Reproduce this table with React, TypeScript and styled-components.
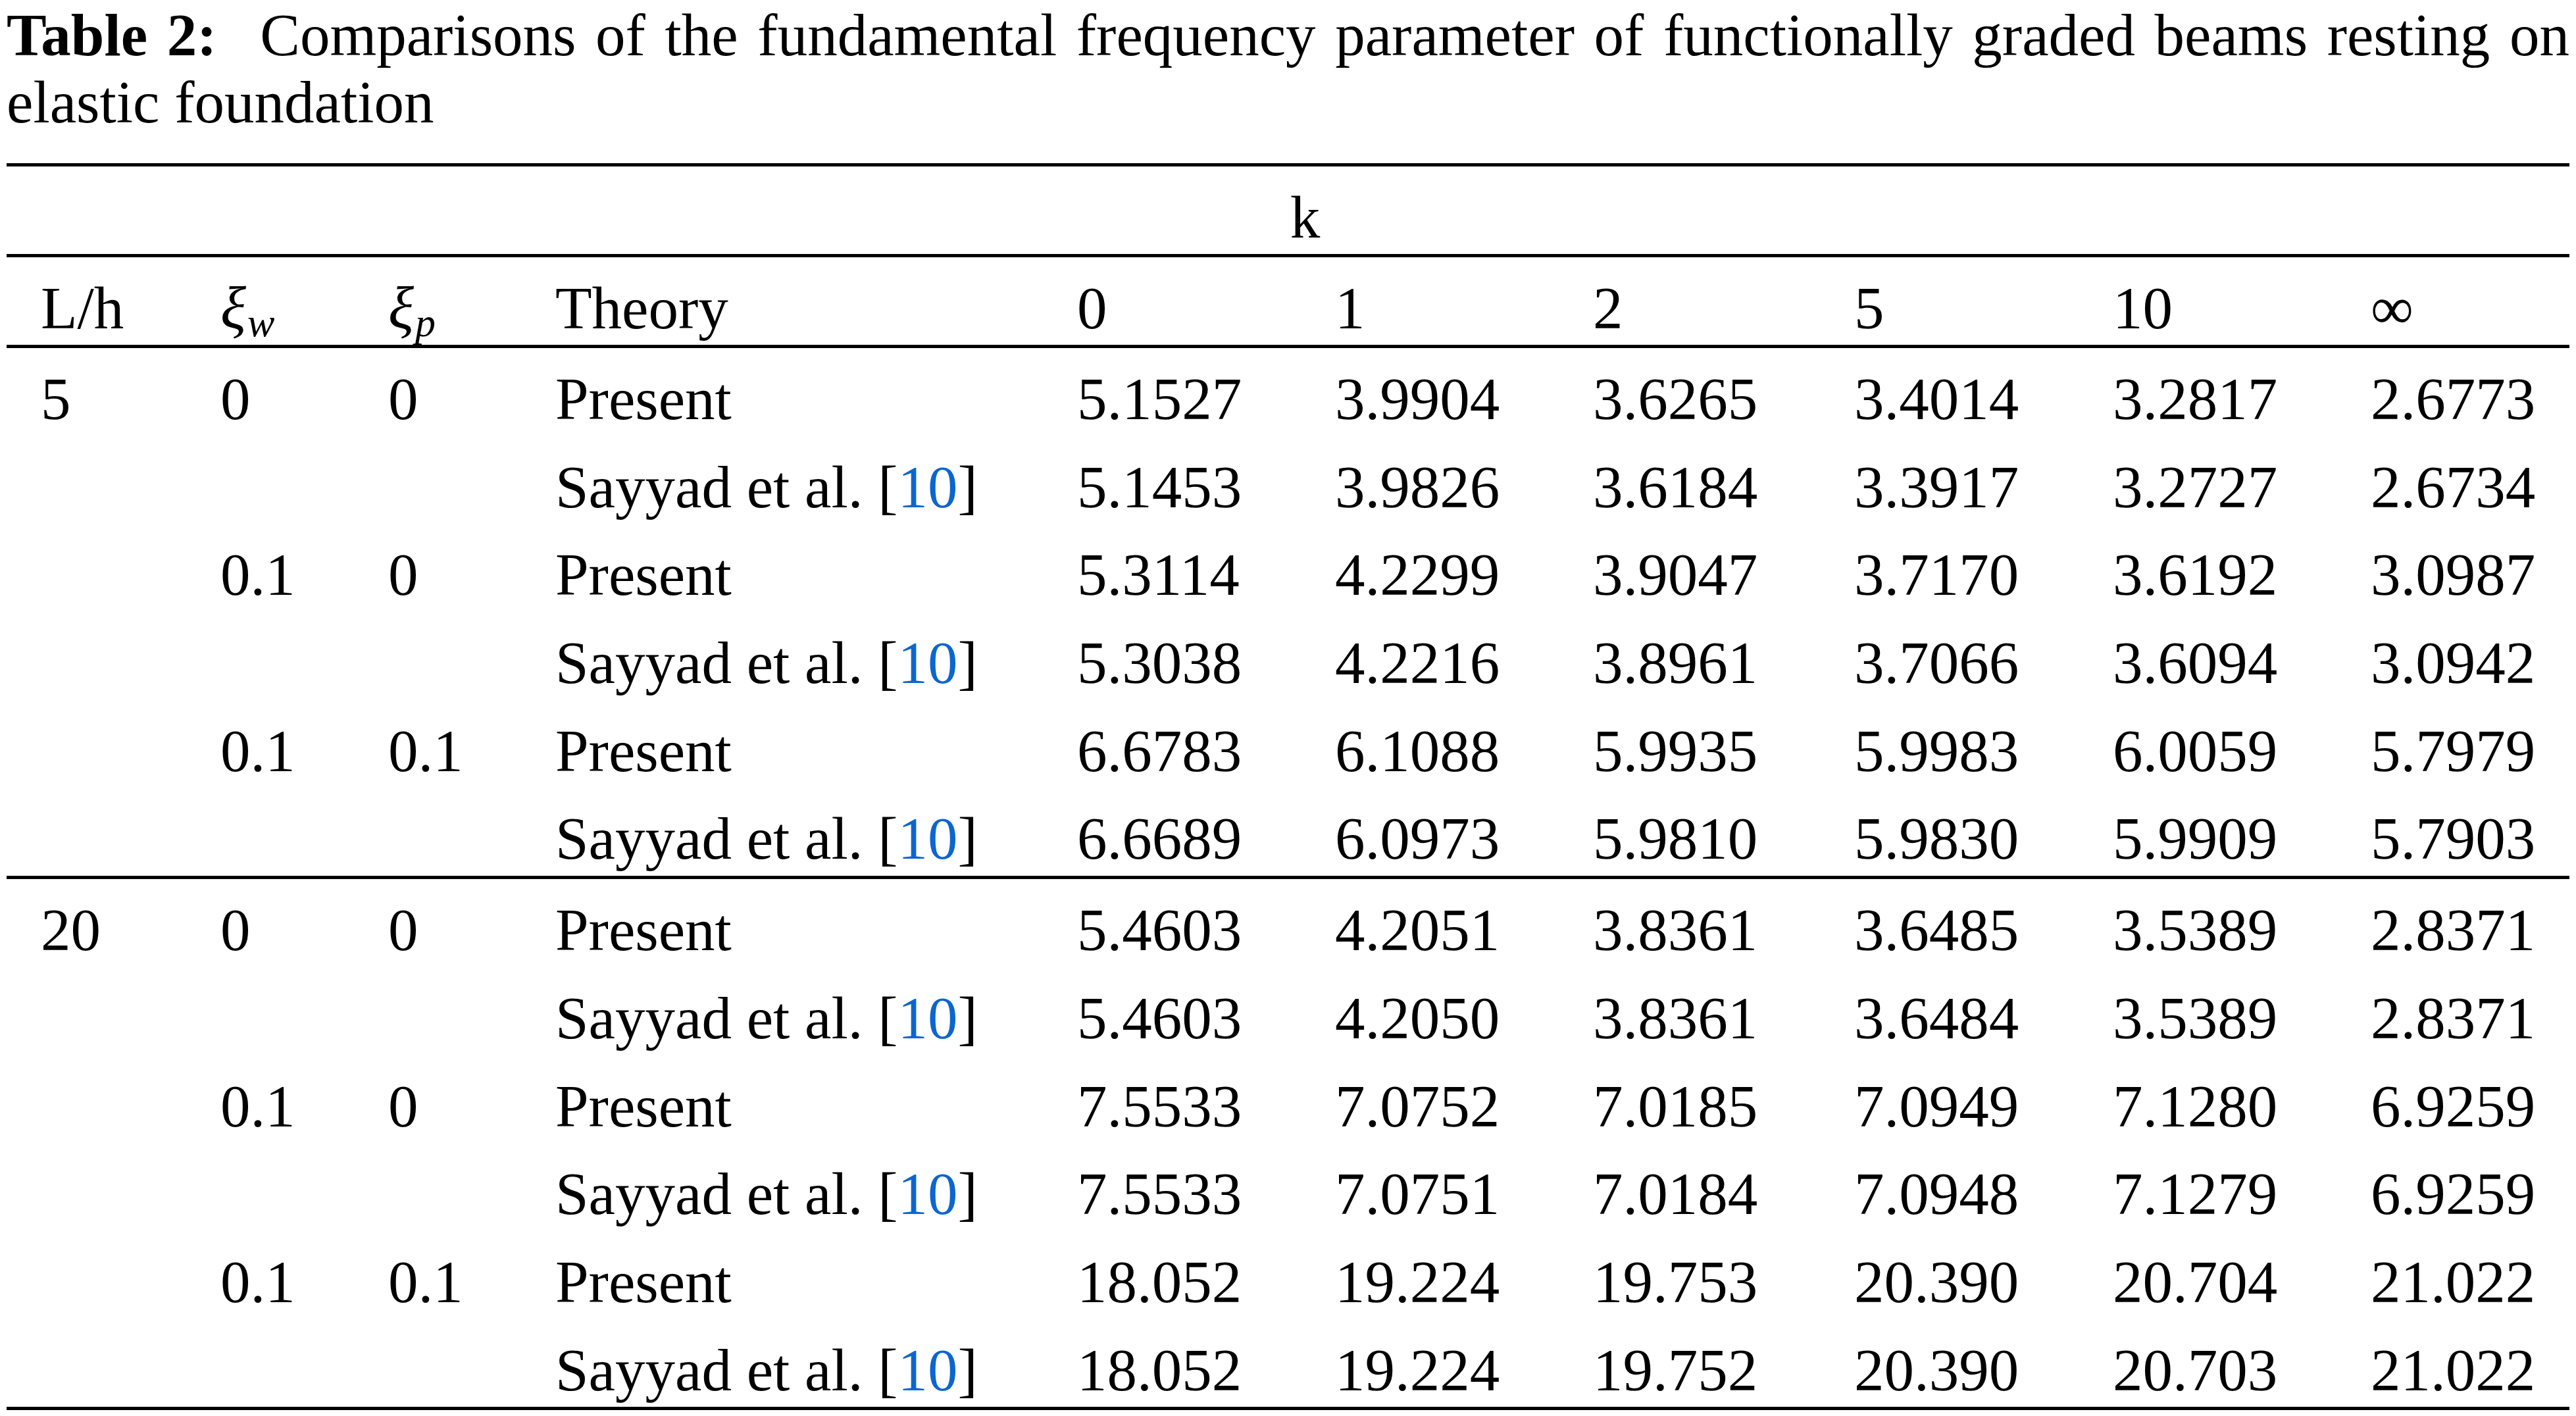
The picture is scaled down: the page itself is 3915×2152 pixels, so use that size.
import React from "react";
import styled, { createGlobalStyle } from "styled-components";

const GlobalStyle = createGlobalStyle`
  html, body {
    margin: 0;
    padding: 0;
    background: #ffffff;
  }
  body {
    font-family: "Liberation Serif", "Times New Roman", serif;
    color: #000000;
  }
`;

const Page = styled.div`
  padding: 0 10px;
  width: 3915px;
  box-sizing: border-box;
`;

const Caption = styled.p`
  margin: 0;
  padding-top: 3px;
  font-size: 91px;
  line-height: 102px;
  text-align: justify;
`;

const CaptionLabel = styled.b`
  font-weight: 700;
  margin-right: 36px;
`;

const Table = styled.div`
  margin-top: 41px;
  display: flex;
  flex-direction: column;
  border-bottom: 5px solid #000;
`;

const Section = styled.div`
  border-top: 5px solid #000;
  display: flex;
  flex-direction: column;
`;

const COLUMNS = "273px 255px 254px 793px 392px 392px 397px 393px 392px 1fr";

const Row = styled.div<{ $h: number }>`
  display: grid;
  grid-template-columns: ${COLUMNS};
  height: ${(p) => p.$h}px;
  box-sizing: border-box;
`;

const Cell = styled.div<{ $span?: boolean }>`
  padding: 28px 0 0 52px;
  font-size: 91px;
  line-height: 100px;
  white-space: nowrap;
  ${(p) => (p.$span ? "grid-column: 1 / -1; text-align: center;" : "")}
`;

const Sym = styled.i`
  font-style: italic;
`;

const Sub = styled.sub`
  font-size: 62px;
  font-style: italic;
  vertical-align: -12px;
  line-height: 0;
  margin-left: 2px;
`;

const Ref = styled.span`
  color: #0b66d0;
`;

type DataRow = [string, string, string, "P" | "S", string[]];

const section1: DataRow[] = [
  ["5", "0", "0", "P", ["5.1527", "3.9904", "3.6265", "3.4014", "3.2817", "2.6773"]],
  ["", "", "", "S", ["5.1453", "3.9826", "3.6184", "3.3917", "3.2727", "2.6734"]],
  ["", "0.1", "0", "P", ["5.3114", "4.2299", "3.9047", "3.7170", "3.6192", "3.0987"]],
  ["", "", "", "S", ["5.3038", "4.2216", "3.8961", "3.7066", "3.6094", "3.0942"]],
  ["", "0.1", "0.1", "P", ["6.6783", "6.1088", "5.9935", "5.9983", "6.0059", "5.7979"]],
  ["", "", "", "S", ["6.6689", "6.0973", "5.9810", "5.9830", "5.9909", "5.7903"]],
];

const section2: DataRow[] = [
  ["20", "0", "0", "P", ["5.4603", "4.2051", "3.8361", "3.6485", "3.5389", "2.8371"]],
  ["", "", "", "S", ["5.4603", "4.2050", "3.8361", "3.6484", "3.5389", "2.8371"]],
  ["", "0.1", "0", "P", ["7.5533", "7.0752", "7.0185", "7.0949", "7.1280", "6.9259"]],
  ["", "", "", "S", ["7.5533", "7.0751", "7.0184", "7.0948", "7.1279", "6.9259"]],
  ["", "0.1", "0.1", "P", ["18.052", "19.224", "19.753", "20.390", "20.704", "21.022"]],
  ["", "", "", "S", ["18.052", "19.224", "19.752", "20.390", "20.703", "21.022"]],
];

const Theory: React.FC<{ kind: "P" | "S" }> = ({ kind }) =>
  kind === "P" ? (
    <>Present</>
  ) : (
    <>
      Sayyad et al. [<Ref>10</Ref>]
    </>
  );

const DataSection: React.FC<{ rows: DataRow[] }> = ({ rows }) => (
  <Section>
    {rows.map((r, i) => (
      <Row key={i} $h={133.7}>
        <Cell>{r[0]}</Cell>
        <Cell>{r[1]}</Cell>
        <Cell>{r[2]}</Cell>
        <Cell>
          <Theory kind={r[3]} />
        </Cell>
        {r[4].map((v, j) => (
          <Cell key={j}>{v}</Cell>
        ))}
      </Row>
    ))}
  </Section>
);

const kValues = ["0", "1", "2", "5", "10", "∞"];

export default function App() {
  return (
    <>
      <GlobalStyle />
      <Page>
        <Caption>
          <CaptionLabel>Table 2:</CaptionLabel> Comparisons of the fundamental frequency parameter of
          functionally graded beams resting on elastic foundation
        </Caption>
        <Table>
          <Section>
            <Row $h={133}>
              <Cell $span>k</Cell>
            </Row>
          </Section>
          <Section>
            <Row $h={133}>
              <Cell>L/h</Cell>
              <Cell>
                <Sym>ξ</Sym>
                <Sub>w</Sub>
              </Cell>
              <Cell>
                <Sym>ξ</Sym>
                <Sub>p</Sub>
              </Cell>
              <Cell>Theory</Cell>
              {kValues.map((k) => (
                <Cell key={k}>{k}</Cell>
              ))}
            </Row>
          </Section>
          <DataSection rows={section1} />
          <DataSection rows={section2} />
        </Table>
      </Page>
    </>
  );
}
